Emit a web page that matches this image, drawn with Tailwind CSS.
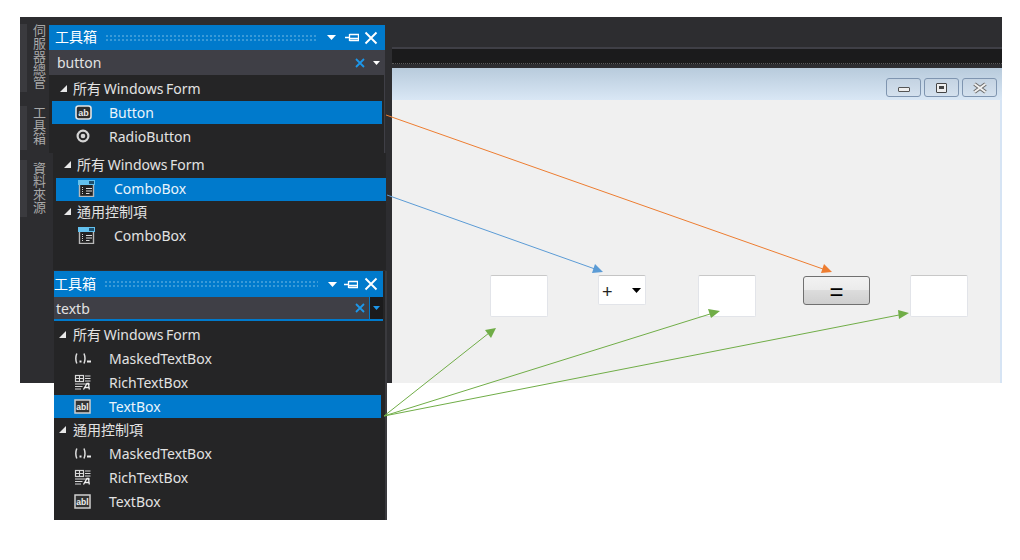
<!DOCTYPE html>
<html lang="zh-Hant">
<head>
<meta charset="UTF-8">
<title>工具箱</title>
<script src="https://cdn.jsdelivr.net/npm/@tailwindcss/browser@4"></script>
</head>
<body class="bg-white">
<!-- shared icons -->
<svg class="hidden">
  <symbol id="tri" viewBox="0 0 7 7"><path d="M7 0V7H0Z" fill="#e8e8e8"/></symbol>
  <symbol id="ab" viewBox="0 0 17 15"><rect x="1" y="1" width="15" height="13" rx="2.500" fill="#2b2b2b" stroke="#e4e4e4" stroke-width="1.600"/><text x="8.500" y="10.800" text-anchor="middle" font-size="9" font-weight="700" font-family="Liberation Sans" fill="#e8e8e8">ab</text></symbol>
  <symbol id="radio" viewBox="0 0 14 14"><circle cx="7" cy="7" r="5.400" fill="none" stroke="#d4d4d4" stroke-width="2.200"/><circle cx="7" cy="7" r="2.300" fill="#d4d4d4"/></symbol>
  <symbol id="combo" viewBox="0 0 17 17"><rect x="1.500" y="1.500" width="14" height="15" fill="#222" stroke="#b8b8b8" stroke-width="1.400"/><rect x="0" y="0" width="17" height="5" fill="#63c1ee"/><rect x="11" y="1" width="5" height="3" fill="#1d4f6e"/><path d="M8 8.500h6M8 11h6M8 13.500h3.500" stroke="#d8d8d8" stroke-width="1.100"/><path d="M4.500 7v8" stroke="#d0d0d0" stroke-dasharray="1 1"/></symbol>
  <symbol id="mask" viewBox="0 0 17 11"><path d="M2.800 .5Q.8 5.500 2.800 10.500M10 .5Q12 5.500 10 10.500" fill="none" stroke="#dcdcdc" stroke-width="1.500"/><rect x="5.500" y="7.500" width="2" height="2" fill="#e8e8e8"/><rect x="13" y="7.500" width="4" height="2" fill="#e8e8e8"/></symbol>
  <symbol id="rich" viewBox="0 0 17 16"><rect x="1.500" y="1.500" width="8" height="6" fill="none" stroke="#d8d8d8" stroke-width="1.200"/><path d="M5.500 1.500v6M1.500 4.500h8M11 2h5.500M11 4.500h5.500M11 7h5.500M1 10h15M1 12.500h7.500M1 15h6" stroke="#d8d8d8" stroke-width="1.100"/><path d="M9.500 15.500L13 9.500h1.500l.8 6M11 13.500h4" fill="none" stroke="#f0f0f0" stroke-width="1.300"/></symbol>
  <symbol id="abl" viewBox="0 0 17 15"><rect x="1" y="1" width="15" height="13" fill="#333" stroke="#cfcfcf" stroke-width="1.500"/><text x="8.500" y="10.800" text-anchor="middle" font-size="8.500" font-weight="700" font-family="Liberation Sans" fill="#eeeeee">abl</text></symbol>
  <symbol id="caret" viewBox="0 0 9 5"><path d="M0 0h9L4.500 5Z" fill="#fff"/></symbol>
  <symbol id="bluecaret" viewBox="0 0 9 5"><path d="M0 0h9L4.500 5Z" fill="#1c97ea"/></symbol>
  <symbol id="pin" viewBox="0 0 14 9"><path d="M0 4.500h4M4.500 1v7M4.500 1.500h9v6h-9M4.500 5.500h9" fill="none" stroke="#fff" stroke-width="1.300"/></symbol>
  <symbol id="x" viewBox="0 0 14 14"><path d="M1.500 1.500l11 11M12.500 1.500l-11 11" stroke="#fff" stroke-width="1.900"/></symbol>
  <symbol id="bluex" viewBox="0 0 10 10"><path d="M1 1l8 8M9 1L1 9" stroke="#1c97ea" stroke-width="1.800"/></symbol>
</svg>

<main class="relative w-[1020px] h-[560px] overflow-hidden text-[14px] text-[#e2e2e2] [word-spacing:-1px] [font-family:'Noto_Sans','Noto_Sans_CJK_TC',sans-serif]">

  <!-- IDE background -->
  <div class="absolute left-[20px] top-[17px] w-[982px] h-[366px] bg-[#2d2d30] flex flex-col">
    <div class="h-[30px]"></div>
    <div class="h-[2px] ml-[372px] bg-[#3f3f46]"></div>
    <div class="h-[15px] ml-[372px] bg-[#1b1b1c] border-b border-dotted border-[#5a5a5a]"></div>
  </div>

  <!-- side tabs -->
  <div class="absolute left-[20px] top-[24px] w-[7px] h-[68px] bg-[#3a3a3e]"></div>
  <div class="absolute left-[20px] top-[106px] w-[7px] h-[44px] bg-[#3a3a3e]"></div>
  <div class="absolute left-[20px] top-[160px] w-[7px] h-[57px] bg-[#3a3a3e]"></div>
  <div class="absolute left-[31px] top-[24px] [writing-mode:vertical-rl] text-[13px] leading-[16px] text-[#a8a8a8]">伺服器總管</div>
  <div class="absolute left-[31px] top-[106px] [writing-mode:vertical-rl] text-[13px] leading-[16px] text-[#a8a8a8]">工具箱</div>
  <div class="absolute left-[31px] top-[162px] [writing-mode:vertical-rl] text-[13px] leading-[16px] text-[#a8a8a8]">資料來源</div>

  <!-- form designer window -->
  <div class="absolute left-[392px] top-[68px] w-[610px] h-[315px] flex flex-col bg-[#d6e4f4]">
    <div class="h-[32px] bg-gradient-to-b from-[#b8cbdc] to-[#d9e7f5] flex justify-end items-start gap-[3px] pt-[10px] pr-[5px]">
      <div class="w-[35px] h-[19px] rounded-[3px] border border-[#7f95b0] bg-gradient-to-b from-[#c4d3e2] to-[#d4e1ee] flex items-center justify-center">
        <div class="w-[12px] h-[5px] mt-[4px] border border-[#555] bg-[#eee] rounded-[1px]"></div>
      </div>
      <div class="w-[35px] h-[19px] rounded-[3px] border border-[#7f95b0] bg-gradient-to-b from-[#c4d3e2] to-[#d4e1ee] flex items-center justify-center">
        <div class="w-[11px] h-[10px] border border-[#444] bg-[#eee] rounded-[1px] flex items-center justify-center"><div class="w-[5px] h-[3px] bg-[#444]"></div></div>
      </div>
      <div class="w-[35px] h-[19px] rounded-[3px] border border-[#7f95b0] bg-gradient-to-b from-[#c4d3e2] to-[#d4e1ee] flex items-center justify-center">
        <svg width="16" height="12" viewBox="0 0 16 12"><path d="M2.500 2l11 8M13.500 2l-11 8" stroke="#6a6a6a" stroke-width="4"/><path d="M2.500 2l11 8M13.500 2l-11 8" stroke="#f2f2f2" stroke-width="2"/></svg>
      </div>
    </div>
    <div class="relative flex-1 mr-[2px] bg-[#f0f0f0]">
      <div class="absolute left-[98px] top-[175px] w-[58px] h-[42px] bg-white border border-[#e2e4e9] border-t-[#c8c8c8] rounded-[2px]"></div>
      <div class="absolute left-[206px] top-[175px] w-[48px] h-[30px] bg-white border border-[#e2e4e9] border-t-[#c4c4c4] rounded-[2px] flex items-center justify-between pl-[3px] pr-[4px] text-[#222] text-[18px]">
        <span class="leading-none mt-[3px] [font-family:'Liberation_Sans',sans-serif]">+</span>
        <svg width="9" height="5" viewBox="0 0 9 5"><path d="M0 0h9L4.500 5Z" fill="#000"/></svg>
      </div>
      <div class="absolute left-[306px] top-[175px] w-[58px] h-[42px] bg-white border border-[#e2e4e9] border-t-[#c8c8c8] rounded-[2px]"></div>
      <div class="absolute left-[411px] top-[176px] w-[67px] h-[29px] rounded-[3px] border border-[#707070] bg-[linear-gradient(#f2f2f2_0%,#ebebeb_48%,#dcdcdc_50%,#cfcfcf_100%)] flex items-center justify-center pt-[3px] text-[#000] text-[24px]">
        <span class="leading-none [font-family:'Liberation_Sans',sans-serif]">=</span>
      </div>
      <div class="absolute left-[518px] top-[175px] w-[58px] h-[42px] bg-white border border-[#e2e4e9] border-t-[#c8c8c8] rounded-[2px]"></div>
    </div>
  </div>

  <!-- toolbox: button -->
  <section class="absolute left-[49px] top-[25px] w-[336px] h-[128px] bg-[#252526] border-r border-[#3f3f46] flex flex-col">
    <header class="h-[25px] shrink-0 -mr-px bg-[#007acc] flex items-center pl-[6px] pr-[7px] text-white">
      <span class="w-[50px] -mt-[2px]">工具箱</span>
      <div class="flex-1 h-[8px] bg-[radial-gradient(#3a9ad8_1px,transparent_1px)] bg-[length:4px_4px] mr-[10px]"></div>
      <svg class="w-[9px] h-[5px] mr-[9px]"><use href="#caret"/></svg>
      <svg class="w-[14px] h-[9px] mr-[5px]"><use href="#pin"/></svg>
      <svg class="w-[14px] h-[14px]"><use href="#x"/></svg>
    </header>
    <div class="h-[25px] shrink-0 -mr-px bg-[#3f3f46] flex items-center pl-[8px] pr-[5px]">
      <span class="flex-1">button</span>
      <svg class="w-[10px] h-[10px] mr-[8px]"><use href="#bluex"/></svg>
      <svg class="w-[7px] h-[4px]"><use href="#caret"/></svg>
    </div>
    <div class="flex items-center h-[22px] mt-[2px] mb-[2px] pl-[11px]"><svg class="w-[7px] h-[7px] mr-[6px]"><use href="#tri"/></svg>所有 Windows Form</div>
    <div class="flex items-center h-[23px] ml-[3px] mr-[2px] bg-[#007acc] pl-[23px] text-[#eaf4fb]"><svg class="w-[17px] h-[15px] mr-[17px]"><use href="#ab"/></svg>Button</div>
    <div class="flex items-center h-[24px] pl-[26px]"><svg class="w-[14px] h-[14px] ml-[1px] mr-[19px]"><use href="#radio"/></svg>RadioButton</div>
  </section>

  <!-- toolbox: combobox -->
  <section class="absolute left-[53px] top-[153px] w-[333px] h-[117px] bg-[#252526] flex flex-col">
    <div class="flex items-center h-[22px] mb-[3px] pl-[11px]"><svg class="w-[7px] h-[7px] mr-[6px]"><use href="#tri"/></svg>所有 Windows Form</div>
    <div class="flex items-center h-[23px] ml-[3px] bg-[#007acc] pl-[22px] pb-[2px] text-[#eaf4fb]"><svg class="w-[17px] h-[17px] mr-[19px]"><use href="#combo"/></svg>ComboBox</div>
    <div class="flex items-center h-[23px] pb-[2px] pl-[11px]"><svg class="w-[7px] h-[7px] mr-[6px]"><use href="#tri"/></svg>通用控制項</div>
    <div class="flex items-center h-[24px] pb-[2px] pl-[25px]"><svg class="w-[17px] h-[17px] mr-[19px]"><use href="#combo"/></svg>ComboBox</div>
  </section>

  <!-- toolbox: textbox -->
  <section class="absolute left-[54px] top-[271px] w-[333px] h-[249px] bg-[#252526] border-r-[2px] border-[#3a3a3e] flex flex-col">
    <header class="h-[26px] shrink-0 mr-[2px] bg-[#007acc] flex items-center pr-[4px] text-white">
      <span class="w-[50px] -mt-[2px]">工具箱</span>
      <div class="flex-1 h-[8px] bg-[radial-gradient(#3a9ad8_1px,transparent_1px)] bg-[length:4px_4px] mr-[10px]"></div>
      <svg class="w-[9px] h-[5px] mr-[7px]"><use href="#caret"/></svg>
      <svg class="w-[14px] h-[9px] mr-[6px]"><use href="#pin"/></svg>
      <svg class="w-[14px] h-[14px] mr-[1px]"><use href="#x"/></svg>
    </header>
    <div class="h-[24px] shrink-0 mr-[2px] bg-[#3f3f46] border-b-[2px] border-[#007acc] flex items-center pl-[2px]">
      <span class="flex-1">textb</span>
      <svg class="w-[10px] h-[10px] mr-[4px]"><use href="#bluex"/></svg>
      <div class="w-[14px] h-full bg-[#1b1b1c] border-l border-[#007acc] flex items-center justify-center"><svg class="w-[7px] h-[4px]"><use href="#bluecaret"/></svg></div>
    </div>
    <div class="flex items-center h-[26px] pl-[5px]"><svg class="w-[7px] h-[7px] mr-[7px]"><use href="#tri"/></svg>所有 Windows Form</div>
    <div class="flex items-center h-[24px] pb-[2px] pl-[20px]"><svg class="w-[17px] h-[11px] mr-[18px]"><use href="#mask"/></svg>MaskedTextBox</div>
    <div class="flex items-center h-[24px] pb-[2px] pl-[20px]"><svg class="w-[17px] h-[16px] mr-[18px]"><use href="#rich"/></svg>RichTextBox</div>
    <div class="flex items-center h-[23px] bg-[#007acc] mr-[4px] pl-[20px] text-[#eaf4fb]"><svg class="w-[17px] h-[15px] mr-[18px]"><use href="#abl"/></svg>TextBox</div>
    <div class="flex items-center h-[23px] pl-[5px]"><svg class="w-[7px] h-[7px] mr-[7px]"><use href="#tri"/></svg>通用控制項</div>
    <div class="flex items-center h-[25px] pl-[20px]"><svg class="w-[17px] h-[11px] mr-[18px]"><use href="#mask"/></svg>MaskedTextBox</div>
    <div class="flex items-center h-[24px] pb-[2px] pl-[20px]"><svg class="w-[17px] h-[16px] mr-[18px]"><use href="#rich"/></svg>RichTextBox</div>
    <div class="flex items-center h-[24px] pb-[2px] pl-[20px]"><svg class="w-[17px] h-[15px] mr-[18px]"><use href="#abl"/></svg>TextBox</div>
  </section>

  <!-- annotation arrows -->
  <svg class="absolute inset-0 pointer-events-none" width="1020" height="560" viewBox="0 0 1020 560">
    <path d="M386 115L823 269" stroke="#ed7d31" fill="none"/><path d="M832 272L821 273L824 264Z" fill="#ed7d31"/>
    <path d="M387 195L595 269" stroke="#5b9bd5" fill="none"/><path d="M603 272L592 273L595 264Z" fill="#5b9bd5"/>
    <path d="M384 416L489 333M384 416L710 314M384 416L899 315" stroke="#70ad47" fill="none"/>
    <path d="M496 328L491 338L485 330Z" fill="#70ad47"/>
    <path d="M720 311L711 318L708 309Z" fill="#70ad47"/>
    <path d="M909 313L899 319L898 310Z" fill="#70ad47"/>
  </svg>
</main>
</body>
</html>
